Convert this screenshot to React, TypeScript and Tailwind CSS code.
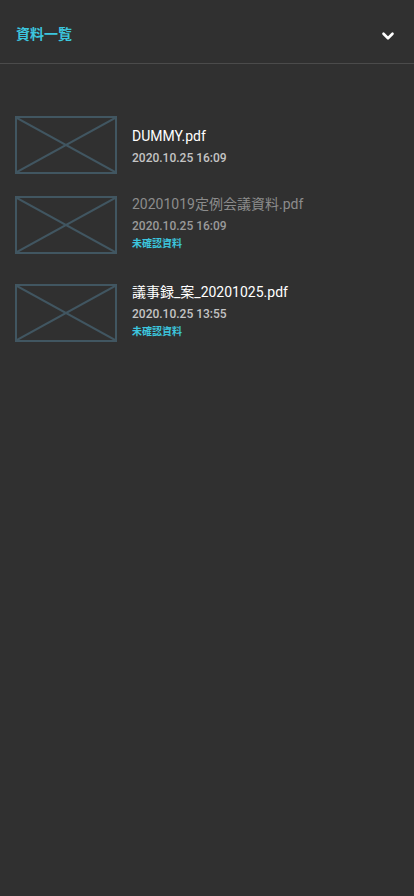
import { ChevronDown } from 'lucide-react';

interface FileItem {
  readonly name: string;
  readonly date: string;
  readonly label?: string;
  readonly muted?: boolean;
}

const files: FileItem[] = [
  { name: 'DUMMY.pdf', date: '2020.10.25 16:09' },
  { name: '20201019定例会議資料.pdf', date: '2020.10.25 16:09', label: '未確認資料', muted: true },
  { name: '議事録_案_20201025.pdf', date: '2020.10.25 13:55', label: '未確認資料' },
];

/**
 * Placeholder thumbnail: a box with an X through it
 */
function Thumbnail() {
  return (
    <div className="w-[102px] h-[58px] shrink-0 border-2 border-[#415661]">
      <svg className="w-full h-full" viewBox="0 0 98 54" preserveAspectRatio="none">
        <line x1="0" y1="0" x2="98" y2="54" stroke="#415661" strokeWidth="2" />
        <line x1="98" y1="0" x2="0" y2="54" stroke="#415661" strokeWidth="2" />
      </svg>
    </div>
  );
}

export default function App() {
  return (
    <div
      className="min-h-[896px] w-full bg-[#303030]"
      style={{ fontFamily: 'Roboto, "Noto Sans CJK JP", sans-serif' }}
    >
      {/* Header */}
      <div className="h-16 flex items-center justify-between pl-4 pr-4 border-b border-[#4b4b4b]">
        <span className="text-[14px] font-bold text-[#3cc6de] mt-[6px]">資料一覧</span>
        <ChevronDown className="h-[18px] w-[18px] text-white mt-[8px] mr-[1px]" strokeWidth={3.5} />
      </div>

      {/* File list */}
      <div className="pt-[52px] px-[15px]">
        {files.map((file) => (
          <div
            key={file.name}
            className={`flex items-start gap-[15px] ${file.label ? 'mb-[30px]' : 'mb-[22px]'}`}
          >
            <Thumbnail />
            <div className={`flex flex-col ${file.label ? '-mt-[2px]' : 'mt-[10px]'}`}>
              <span className={`text-[14px] leading-5 ${file.muted ? 'text-[#8c8c8c]' : 'text-white'}`}>
                {file.name}
              </span>
              <span className={`text-[12px] font-medium leading-4 mt-[4px] ${file.muted ? 'text-[#9a9a9a]' : 'text-[#c4c4c4]'}`}>
                {file.date}
              </span>
              {file.label && (
                <span className="text-[10px] font-bold leading-3 mt-[4px] text-[#3cc6de]">{file.label}</span>
              )}
            </div>
          </div>
        ))}
      </div>
    </div>
  );
}
